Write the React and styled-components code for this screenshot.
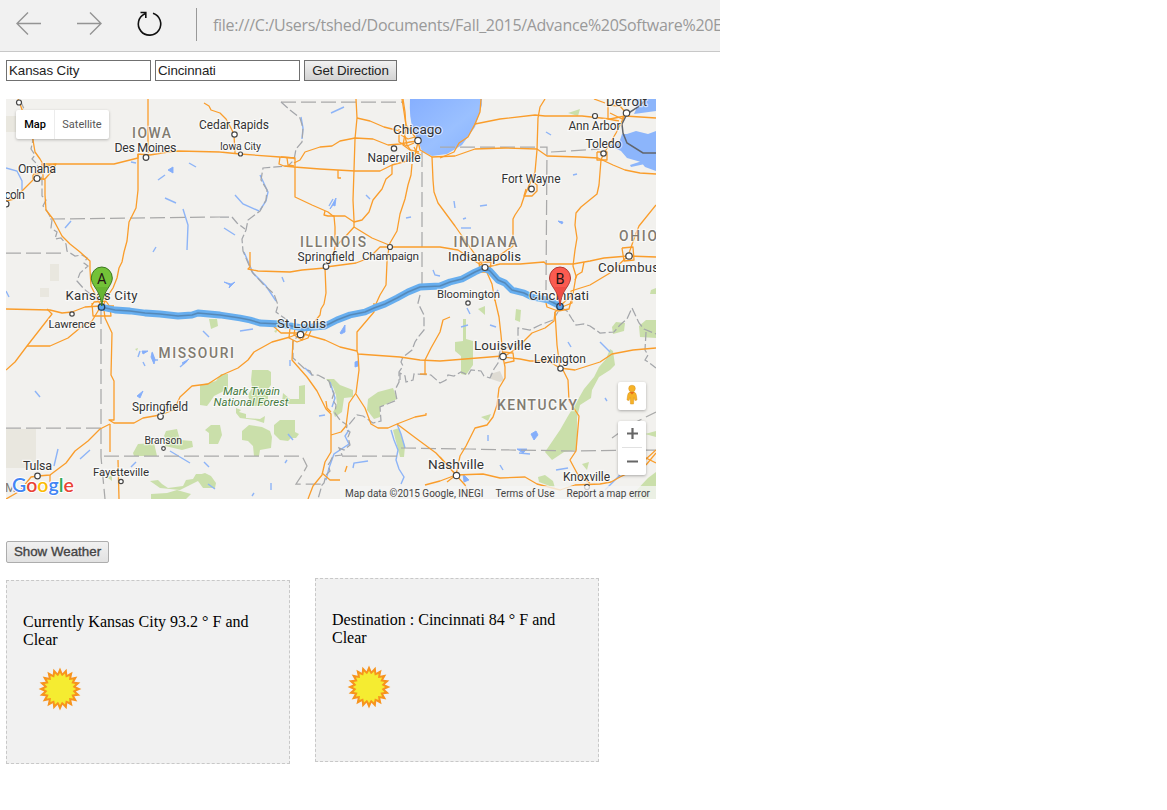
import React from "react";
import styled, { createGlobalStyle } from "styled-components";

const Global = createGlobalStyle`
  * { box-sizing: border-box; }
  body { margin: 0; background: #fff; }
`;

const Page = styled.main`
  width: 1167px;
  height: 810px;
  overflow: hidden;
  background: #fff;
`;

const BrowserBar = styled.header`
  display: flex;
  align-items: center;
  width: 720px;
  height: 52px;
  overflow: hidden;
  background: #f1f1f1;
  border-bottom: 1px solid #c8c8c8;
`;

const NavIcons = styled.svg`
  flex: none;
  width: 196px;
  height: 51px;
`;

const Address = styled.div`
  flex: none;
  height: 33px;
  margin-top: -2px;
  padding: 5px 0 0 16px;
  border-left: 1px solid #999;
  font: 16px/25px "Open Sans", sans-serif;
  letter-spacing: -0.3px;
  color: #999;
  white-space: nowrap;
`;

const Content = styled.div`
  padding-left: 6px;
`;

const SearchRow = styled.form`
  display: flex;
  gap: 4px;
  margin-top: 8px;
  height: 21px;
`;

const Field = styled.input`
  width: 145px;
  height: 21px;
  padding: 0 2px;
  border: 1px solid #707070;
  border-radius: 0;
  background: #fff;
  color: #222;
  font: 13.33px "Liberation Sans", sans-serif;
  letter-spacing: -0.08px;
  outline: none;
`;

const Button = styled.button`
  display: block;
  width: ${(p) => p.$width}px;
  height: ${(p) => (p.$soft ? 22 : 21)}px;
  padding: 0 0 ${(p) => (p.$soft ? 2 : 0)}px;
  border: 1px solid ${(p) => (p.$soft ? "#adadad" : "#707070")};
  border-radius: ${(p) => (p.$soft ? 2 : 0)}px;
  background: linear-gradient(#f1f1f1, ${(p) => (p.$soft ? "#e2e2e2" : "#d3d3d3")});
  color: ${(p) => (p.$soft ? "#444" : "#222")};
  font: 13.33px "Liberation Sans", sans-serif;
  letter-spacing: ${(p) => (p.$soft ? 0 : -0.1)}px;
  -webkit-text-stroke: ${(p) => (p.$soft ? 0.35 : 0)}px #444;
  white-space: nowrap;
`;

const MapFrame = styled.section`
  position: relative;
  width: 650px;
  height: 400px;
  margin: 18px 0 42px;
  overflow: hidden;
  background: #f2f1ee;
`;

const MapSvg = styled.svg`
  display: block;
  width: 650px;
  height: 400px;
`;

const MapTypes = styled.div`
  position: absolute;
  left: 10px;
  top: 11px;
  display: flex;
  height: 29px;
  background: #fff;
  border-radius: 2px;
  box-shadow: 0 1px 3px rgba(0, 0, 0, 0.25);
  font: 11px/29px Roboto, sans-serif;
`;

const MapType = styled.span`
  width: ${(p) => (p.$active ? 38 : 55)}px;
  text-align: center;
  color: ${(p) => (p.$active ? "#000" : "#565656")};
  font-weight: ${(p) => (p.$active ? 500 : 400)};
  border-left: ${(p) => (p.$active ? "none" : "1px solid #ececec")};
`;

const Controls = styled.div`
  position: absolute;
  right: 10px;
  top: 283px;
  display: flex;
  flex-direction: column;
  gap: 11px;
`;

const Control = styled.div`
  width: 28px;
  height: ${(p) => p.$height}px;
  background: #fff;
  border-radius: 2px;
  box-shadow: 0 1px 3px rgba(0, 0, 0, 0.3);
  & svg { display: block; }
`;

const Brand = styled.div`
  position: absolute;
  left: 6px;
  bottom: 1px;
  font: 600 19.5px/26px "Lato", sans-serif;
  letter-spacing: 0.05px;
  -webkit-text-stroke: 2px #fff;
  paint-order: stroke fill;
`;

const BrandLetter = styled.span`
  color: ${(p) => p.$color};
`;

const Credits = styled.div`
  position: absolute;
  right: 0;
  bottom: 0;
  display: flex;
  height: 13px;
  width: 316px;
  padding: 0 6px 0 5px;
  justify-content: space-between;
  background: rgba(245, 245, 245, 0.78);
  color: #444;
  font: 10px/16px Roboto, sans-serif;
  white-space: nowrap;
`;

const Cards = styled.div`
  display: flex;
  gap: 25px;
  margin-top: 15px;
`;

const Card = styled.article`
  width: 284px;
  height: 184px;
  margin-top: ${(p) => p.$drop}px;
  padding: 32px 16px 0;
  background: #f1f1f1;
  border: 1px dashed #c8c8c8;
`;

const Forecast = styled.p`
  width: 245px;
  margin: 0;
  color: #000;
  font: 16px/18px "Liberation Serif", serif;
`;

const SunIcon = styled.svg`
  display: block;
  width: 44px;
  height: 44px;
  margin: 18px 0 0 14.5px;
`;

const star = (points, outer, inner) =>
  Array.from({ length: points * 2 }, (_, i) => {
    const r = i % 2 ? inner : outer;
    const a = (Math.PI * i) / points - Math.PI / 2;
    return `${(22 + r * Math.cos(a)).toFixed(2)},${(22 + r * Math.sin(a)).toFixed(2)}`;
  }).join(" ");

const Sun = () => (
  <SunIcon viewBox="0 0 44 44">
    <polygon points={star(20, 21.4, 16)} fill="#f7941e" />
    <polygon points={star(20, 16.2, 12.8)} fill="#f5ec31" />
  </SunIcon>
);

const roads = [
  "43,164 114,164 138,158 138,154 150,155 168,152 178,151 220,152 240,154 280,157 294,158",
  "148,99 148,153",
  "138,154 138,190 136,208 132,216 129,222 127,241 124,252 122,262 119,268 117,278 113,288 107,297 103,306",
  "18,99 20,104 24,115 30,128 33,140 35,152 40,159 43,164 43,179 45,180 45,195 46,210 53,219 62,236 70,244 80,252 90,261 90,269 91,286 95,294 101,306",
  "33,175 34,174 42,173 42,164 46,166 56,164 52,171 45,179 33,179 33,175",
  "6,201 14,199 23,190 33,180",
  "204,103 209,106 211,110 220,113 226,119 232,130 234,135 235,153",
  "356,99 357,118 355,139 354,170 353,200 354,220 354,227 345,237 335,247 333,258 326,266",
  "357,118 370,121 384,127 396,130 405,133",
  "294,163 300,160 305,152 320,147 332,146 340,141 355,138 373,139 388,145 400,144 410,142 418,141",
  "280,157 279,164 284,166 294,167 320,169 355,171 380,171 392,165 407,161 415,155 418,142",
  "281,157 295,158 295,197 312,205 328,212 333,216 345,216 354,222 362,220 369,212 373,200 382,189 386,179 392,174 392,165",
  "325,211 324,215 328,216 334,216 335,227 335,245",
  "287,158 288,165 294,166",
  "338,170 338,178 341,178",
  "412,164 411,175 408,185 405,199 400,214 397,231 390,243 389,247 387,262 386,285 380,295 375,306",
  "354,227 372,238 389,245",
  "389,247 380,247 369,258 356,263 326,267",
  "389,247 422,247 440,247 458,250 484,267",
  "250,252 250,267 248,269 258,271 290,272 302,270 325,268 326,293 324,304 321,309 320,315 311,326 300,333",
  "402,99 406,125 412,133 418,141 420,150 432,157 455,156 475,149 505,148 537,149 547,156 580,157 598,158 613,165 625,170 640,173 656,174",
  "403,99 405,112 406,128 403,145 410,150 419,152",
  "399,129 399,142 407,146 414,143",
  "405,136 407,145 414,155",
  "401,135 408,139 415,137",
  "414,147 417,153 421,155",
  "440,158 454,152 459,143 468,137 475,124 500,119 535,115 545,116 582,116 610,119 625,116 656,118",
  "475,124 480,112 481,99",
  "432,157 433,180 434,192 438,203 455,226 469,246 484,267",
  "545,99 540,107 538,118 537,150 535,172 531,181 524,197 521,206 515,215 513,219 513,246 500,255 487,262",
  "532,181 537,185 537,191 532,196 524,196 526,189",
  "626,113 616,133 609,145 603,155 601,160 599,185 597,194 581,207 576,213 575,225 577,238 575,250 573,266 576,276 573,294 560,306",
  "608,99 608,119 619,121",
  "594,99 605,103",
  "610,113 622,119 626,113 620,106 608,105",
  "597,152 607,152 607,160 597,160 597,152",
  "487,267 500,264 520,264 544,262 546,264 573,264 590,261 604,258 628,256 656,257",
  "656,205 639,226 635,236 628,256 610,273 590,285 571,291 572,303 562,307",
  "584,262 582,272 577,275 575,280",
  "622,248 633,247 634,260 624,261 622,248",
  "485,268 492,284 495,301",
  "479,262 491,262 490,272 480,272 479,262",
  "6,309 50,310 62,313 72,312 85,307 100,306 114,306",
  "6,370 15,362 27,346 52,314 47,309",
  "27,346 50,346 68,338 80,328 92,321 101,306",
  "92,303 93,316 111,316 110,307 106,301 94,302 91,307",
  "104,310 105,318 112,333 111,375 114,381 114,420 109,420 114,423 134,423 143,418 160,415 174,410 180,397 192,386 208,384 222,375 238,368 248,360 254,352 272,342 290,337 300,333",
  "110,424 110,452",
  "110,424 100,429 88,441 75,451 66,463 50,475 38,476 31,477 20,491 6,499",
  "50,475 50,495",
  "118,460 119,499",
  "272,325 281,333 300,333 325,340 340,347 357,351 358,354 400,357 420,360 440,361 490,357 502,356",
  "290,328 289,338 297,342 308,338 312,328",
  "295,328 294,335 302,340 307,331",
  "357,351 357,332 374,312 374,303",
  "358,354 359,370 356,393 349,403 346,426 341,432 331,435",
  "293,340 292,360 307,377 317,391 326,409 331,414 331,452 325,462 322,475 313,486 308,499",
  "326,401 327,408 331,412",
  "356,394 365,408 371,424 378,428 388,428 397,424 415,417 426,415 426,413",
  "397,424 417,439 436,453 450,468 456,475",
  "425,374 425,360 431,348 440,332 443,320 450,317",
  "420,374 427,374",
  "322,473 330,480 340,480",
  "345,472 347,466",
  "425,485 440,481 456,475 483,474 500,478 525,477 537,484 560,490 575,485 600,484 611,482 620,477 637,469 646,459 656,450",
  "495,300 499,317 501,335 503,357 505,367 505,378 499,388 497,405 493,417 487,425 475,428 466,446 460,456 456,475",
  "502,352 513,353 514,361 505,363",
  "503,357 520,359 530,361 548,361 560,368",
  "505,356 516,349 524,341 532,333 545,328 554,321 555,312 562,306",
  "546,303 547,307 558,311 569,309 571,301",
  "555,312 557,345 560,368 575,370 600,362 612,354 633,350 656,348",
  "563,370 568,380 569,401 579,416 576,451 570,460 578,475 590,483",
  "456,475 465,485 471,499",
  "440,457 456,475 447,482",
  "640,455 656,463",
  "646,465 656,453",
];

const borders = [
  "6,253 65,253",
  "50,219 220,217",
  "101,309 101,457 105,499",
  "6,428 101,428",
  "104,456 302,456 307,466 302,475 296,484 325,484",
  "342,456 400,456",
  "401,448 470,449 510,450 575,451 656,450",
  "281,102 403,102",
  "422,152 422,291",
  "440,147 547,147 546,290",
  "551,152 600,149",
  "612,438 630,425 656,412",
];

const riverBorders = [
  "20,100 25,111 33,140 31,149 35,155 32,159 37,164 42,180 42,196 46,200 43,206 47,211 52,220 51,228 57,232 55,239 61,238 66,244 67,251 75,256 82,255 87,258 84,263 88,266 80,273 77,281 84,289 98,300",
  "281,102 290,110 300,118 303,128 302,142 296,149 294,160 288,166 263,168 261,180 267,190 266,200 260,211 248,220 246,230 242,239 243,251 252,272 263,284 274,294 278,305 276,312 287,320 293,327 300,333 293,342 293,358 305,369 310,371 312,375 318,375 329,381 331,388 334,393 332,399 336,405 335,413 340,420 347,425 346,430 350,432 348,437 350,445 344,450 339,448 342,455 333,456 330,462 328,465 330,471 326,475 324,483 322,485 318,499",
  "220,217 232,217 237,223 245,229",
  "420,295 418,303 424,315 424,330 419,336 415,342 412,350 403,357 401,362 403,366 399,372 399,382 395,390 397,400 380,407 381,421 373,423 363,416 357,415 347,427",
  "400,380 400,373 405,376 406,382 413,380 414,374 431,375 440,383 446,380 448,375 454,376 461,372 468,375 471,370 481,371 484,376 490,378 494,369 498,363 500,350 518,343 518,328 530,330 540,325 553,320 558,312",
  "560,307 567,311 572,319 576,325 584,324 590,326 600,333 614,332 620,325 627,319 632,308 639,323 644,329 656,334",
  "646,332 645,350 648,355 645,360 648,362 656,368",
];

const rivers = [
  "6,168 17,171 22,181 22,190", "131,162 136,163", "158,180 165,175", "165,198 176,203", "189,163 196,167",
  "183,209 188,225 187,250", "153,252 156,247", "65,228 71,221", "6,291 9,297", "301,117 303,128 302,139",
  "260,175 268,192 266,201 260,210", "235,195 243,204 259,211", "244,252 253,273 266,286 276,301",
  "224,228 235,235", "331,113 344,107", "329,206 333,199", "366,195 370,199", "406,218 411,217",
  "433,270 435,275 440,276", "282,277 284,282", "454,201 455,208", "463,219 466,218", "480,206 487,205",
  "461,228 471,228", "559,222 562,222", "573,175 577,174", "546,132 551,135", "203,331 209,337",
  "140,351 138,357", "152,352 155,360 158,360", "143,362 145,366", "180,367 187,361", "35,391 40,397",
  "54,466 58,449", "80,459 90,450", "131,467 136,462", "170,451 190,463", "204,462 209,467", "287,460 285,463",
  "271,483 271,490", "252,496 254,493", "391,430 394,440 398,450 396,460 399,469 404,477 401,484", "397,424 401,434 405,448",
  "349,430 345,436 349,444 334,454 329,468 326,480", "330,382 335,398 332,407", "353,468 354,463 368,461",
  "319,416 325,415", "240,331 253,329", "290,360 290,366", "493,297 498,290", "519,453 530,454",
  "467,308 470,314", "490,325 496,327", "568,342 571,347", "605,398 607,401", "461,327 468,325",
  "488,435 488,441", "500,465 503,470", "556,470 568,468", "605,490 620,475", "625,471 636,467",
  "288,434 293,440", "208,484 215,489", "305,368 312,375", "600,342 610,352",
];

const lakes = [
  "168,170 173,167 173,173", "331,207 336,198 335,206 333,205 330,209", "340,333 345,325 345,332 341,334", "355,362 358,361 358,366 355,367",
  "152,353 155,360 154,364 151,357", "137,396 143,391 140,398", "182,363 189,359 184,364",
  "531,434 536,431 538,435 534,440", "463,474 469,480 464,482", "224,282 231,284 235,282 229,288 230,285",
  "517,449 527,449 523,453", "558,221 563,222 562,224", "142,351 148,351 143,354",
];

const greens = [
  "200,385 216,381 221,374 228,374 228,389 214,396 210,402 207,406 200,405",
  "252,370 268,370 271,372 271,385 268,389 268,401 262,406 251,406 248,395 252,388 251,380",
  "283,393 290,399 299,399 299,386 305,385 305,404 290,404 282,402",
  "236,408 241,410 239,412 246,414 246,418 260,419 265,416 264,423 255,420 240,418 236,413",
  "242,431 249,425 262,427 270,431 272,437 271,448 260,450 259,456 254,456 253,446 248,441 242,440",
  "274,425 280,420 295,420 295,432 299,434 296,438 291,438 288,441 280,440 274,434",
  "205,430 211,425 220,425 222,435 218,444 209,444 209,433",
  "195,476 205,473 211,476 216,483 215,488 203,488 198,481",
  "326,379 334,379 340,385 353,390 353,397 344,398 342,412 335,417 333,412 337,405 336,395 333,387",
  "368,399 378,392 393,388 397,399 380,407 380,417 374,419 367,410",
  "393,430 399,428 405,446 404,457 400,457",
  "463,319 466,319 466,339 473,341 473,365 466,375 461,374 461,356 455,351 455,342 463,341",
  "516,309 521,310 520,322 515,320",
  "610,349 613,351 615,365 610,370 599,377 592,390 591,398 580,405 577,418 577,450 564,452 552,460 545,452 560,430 568,416 576,403 584,389 594,377 599,367 606,359",
  "612,327 616,322 625,323 624,331 613,334",
  "639,326 646,320 656,320 656,338 640,337",
  "481,417 491,414 488,421",
  "150,481 158,480 162,484 168,488 183,486 186,480 193,479 196,474 204,474 200,480 190,485 180,490 160,488",
  "151,494 167,493 177,490 191,494 186,499 151,499",
  "133,453 138,444 154,443 157,456 134,456",
  "166,431 177,429 180,440 192,441 193,447 182,450 165,446 167,440 164,436",
  "568,113 580,109 578,116",
  "209,319 217,319 218,326 211,329",
  "651,290 656,288 656,294 650,294",
  "538,477 545,475 553,481 555,488 539,482",
  "634,493 648,478 656,472 656,499 634,499",
  "582,464 589,462 587,470",
  "645,434 656,431 656,437",
  "478,309 485,306 485,315",
  "274,331 278,329 276,333",
  "108,478 112,474 112,481",
  "135,349 138,348 137,351",
];

const cities = [
  [234.5, 134.5, 2.7], [240.5, 154, 2], [146, 157.5, 2.8], [37, 178.5, 3], [19, 102.5, 2.5], [6, 204, 3],
  [394, 148.5, 2.7], [418, 140.5, 3.2], [326, 266.5, 2.8], [390, 247, 2.5], [485, 267.5, 3], [531.5, 189, 2.8],
  [603.5, 153.5, 2.7], [595, 116, 2.5], [626.5, 113, 3.2], [629, 256, 3.2], [468, 303, 2.2], [503, 356.5, 3.2],
  [560.5, 368.5, 2.7], [300.5, 334.5, 3.2], [160.5, 416.5, 2.8], [163.5, 448.5, 1.8], [121, 481.5, 2.2],
  [37.5, 476, 2.8], [72, 314, 2.2], [456.5, 475.5, 3.2], [587, 487, 2.5],
];

// [text, left, baseline, width, size]
const labels = [
  ["Cedar Rapids", 199, 128.5, 70, 12], ["Iowa City", 220, 149.5, 41, 10.5], ["Des Moines", 114.5, 151.7, 62, 12.5],
  ["Omaha", 18, 172.5, 38, 12.5], ["coln", 4.5, 198.5, 20.5, 12], ["Chicago", 393, 134.3, 49, 13.6],
  ["Naperville", 367.5, 162, 53, 12], ["Springfield", 297.5, 260.7, 57, 12], ["Champaign", 362, 260, 57, 11.8],
  ["Indianapolis", 448, 261.2, 73, 13.2], ["Fort Wayne", 501.5, 183.3, 59, 12], ["Ann Arbor", 568.5, 129.8, 52, 12],
  ["Toledo", 585.5, 148, 36, 12.3], ["Detroit", 606, 106, 41, 13.2], ["Columbus", 598, 272, 61, 13.2],
  ["Bloomington", 437, 298, 63, 11.4], ["Cincinnati", 529, 300.3, 60, 13.2], ["Kansas City", 65.5, 300.3, 72, 13.2],
  ["Lawrence", 48.5, 327.5, 47, 11.5], ["St Louis", 277, 328.2, 49, 13.2], ["Louisville", 474, 349.7, 57, 13.4],
  ["Lexington", 534, 362.7, 52, 12], ["Springfield", 132, 410.7, 56, 12], ["Branson", 144.5, 444, 37.5, 10.5],
  ["Fayetteville", 93, 476.3, 56, 11.5], ["Tulsa", 23, 470.3, 29, 12.5], ["Nashville", 428, 469.3, 56, 13.6],
  ["Knoxville", 563, 481, 47, 12],
];

const states = [
  ["IOWA", 132, 137.5, 39], ["ILLINOIS", 300, 247, 66], ["INDIANA", 453.5, 247, 64], ["OHIO", 619, 241, 38],
  ["MISSOURI", 158.5, 358.2, 75.5], ["KENTUCKY", 497, 410.2, 80],
];

const routePath = "101,307 115,310 130,311 145,313 160,314 178,316 192,315 198,313 220,315 240,318 250,320 260,323 280,324 303,328 325,326 337,320 350,315 365,312 374,308 385,304 397,298 408,292 420,287 440,286 450,282 462,279 475,272 484,268 490,271 498,280 505,283 512,290 524,293 532,297 548,300 560,306";

const Line = ({ points, ...rest }) => <polyline points={points} fill="none" {...rest} />;

const Pin = ({ x, letter, light, dark, edge }) => (
  <g transform={`translate(${x} 306)`}>
    <path d="M0 0C-1-9-3-13-7-19C-9-22-10.5-25-10.5-28A10.5 11 0 0 1 10.5-28C10.5-25 9-22 7-19C3-13 1-9 0 0Z" fill={light} stroke={edge} />
    <path d="M0-2C-1-10-3-14-6-19H6C3-14 1-10 0-2Z" fill={dark} opacity=".65" />
    <text y="-22" textAnchor="middle" fontSize="14.5" fill="#231515">{letter}</text>
  </g>
);

const RegionMap = () => (
  <MapSvg viewBox="6 99 650 400" fontFamily="Roboto, sans-serif">
    <defs>
      <linearGradient id="lake" x2="1" y2="1">
        <stop stopColor="#86afff" /><stop offset=".55" stopColor="#9ac0ff" /><stop offset="1" stopColor="#86b1ff" />
      </linearGradient>
    </defs>
    <rect x="6" y="99" width="650" height="400" fill="#f2f1ee" />
    <path d="M6 429H36V461L28 468H6ZM50 264H59V281H50ZM40 288H49V297H40ZM6 116H16V132H6Z" fill="#e9e7df" />
    <path d="M490 374L500 371 504 380 500 382 491 379Z" fill="#dedbd3" />
    <g fill="#cadfaa">{greens.map((p) => <polygon key={p} points={p} />)}</g>
    <path d="M410 99Q409 118 413 129L422 151 432 156 447 154 462 145 475 127 482 105V99Z" fill="url(#lake)" />
    <path d="M656 99H634Q639 105 634 114L656 111ZM622 134L627 134 636 131 648 134 656 131V171L645 167 641 162 627 158 621 151 609 145 619 143ZM630 165L642 161 645 164 631 167Z" fill="#8cb5fb" />
    <g stroke="#8db4f7" strokeWidth="1.4">{rivers.map((p) => <Line key={p} points={p} />)}</g>
    <g fill="#84aefa" stroke="#84aefa" strokeWidth=".9">{lakes.map((p) => <polygon key={p} points={p} />)}</g>
    <g stroke="#a9a9a9" strokeWidth="1.25" strokeDasharray="15 5">{borders.map((p) => <Line key={p} points={p} />)}</g>
    <g stroke="#a4a6aa" strokeWidth="1.25" strokeDasharray="9 3">{riverBorders.map((p) => <Line key={p} points={p} />)}</g>
    <g stroke="#fa9d2b" strokeWidth="1.3" strokeLinejoin="round">{roads.map((p) => <Line key={p} points={p} />)}</g>
    <path d="M647 99L638 107 627 114 622 124 623 133 627 143 643 153H656" fill="none" stroke="#61656c" strokeWidth="1.5" />
    <Line points={routePath} stroke="#67aeef" strokeWidth="6.8" strokeLinejoin="round" />
    <Line points={routePath} stroke="#5689b8" strokeWidth="1.5" strokeLinejoin="round" />
    <g fill="#fff" stroke="#444" strokeWidth="1.2">
      {cities.map(([x, y, r]) => <circle key={`${x}-${y}`} cx={x} cy={y} r={r} />)}
    </g>
    <g fill="#5ba4ed" stroke="#213c58" strokeWidth="1.3">
      <circle cx="101.500" cy="307" r="3.200" /><circle cx="560" cy="306.500" r="3.200" />
    </g>
    <g fill="#333" stroke="#fff" strokeWidth="2.4" strokeOpacity=".6" paintOrder="stroke">
      {labels.map(([text, x, y, width, size]) => (
        <text key={`${text}-${x}`} x={x} y={y} fontSize={size} textLength={width}>{text}</text>
      ))}
    </g>
    <g fill="#817b70" stroke="#fff" strokeWidth="2.4" strokeOpacity=".6" paintOrder="stroke" fontSize="13.8" fontWeight="500">
      {states.map(([text, x, y, width]) => <text key={text} x={x} y={y} textLength={width}>{text}</text>)}
    </g>
    <g fill="#467a40" stroke="#fff" strokeWidth="2" strokeOpacity=".75" paintOrder="stroke" fontSize="11.5" fontStyle="italic">
      <text x="223" y="395.300" textLength="57">Mark Twain</text>
      <text x="213.500" y="406" textLength="75">National Forest</text>
    </g>
    <text x="5" y="492" fontSize="12.500" fill="#817b70">M</text>
    <Pin x={101.8} letter="A" light="#73c238" dark="#63ad30" edge="#3c7820" />
    <Pin x={560} letter="B" light="#fa5b50" dark="#e9463e" edge="#b13831" />
  </MapSvg>
);

const brandLetters = [["G", "#4285f4"], ["o", "#ea4335"], ["o", "#fbbc05"], ["g", "#4285f4"], ["l", "#34a853"], ["e", "#ea4335"]];

export default function App() {
  return (
    <Page>
      <Global />
      <BrowserBar>
        <NavIcons viewBox="0 0 196 51" fill="none" strokeWidth="1.4">
          <path d="M41 23.500H17M28 12.500L17 23.500L28 34.500M77 23.500H101M90 12.500L101 23.500L90 34.500" stroke="#949494" />
          <path d="M153 13.300A11.200 11.200 0 1 1 145 13.700M140.500 12.500H145.800V18" stroke="#111" strokeWidth="1.600" />
        </NavIcons>
        <Address>file:///C:/Users/tshed/Documents/Fall_2015/Advance%20Software%20E</Address>
      </BrowserBar>
      <Content>
        <SearchRow>
          <Field defaultValue="Kansas City" />
          <Field defaultValue="Cincinnati" />
          <Button type="button" $width={93}>Get Direction</Button>
        </SearchRow>
        <MapFrame>
          <RegionMap />
          <MapTypes><MapType $active>Map</MapType><MapType>Satellite</MapType></MapTypes>
          <Controls>
            <Control $height={28}>
              <svg width="28" height="28" viewBox="0 0 28 28">
                <path d="M10.500 11Q9.500 12 9 18L11 18.500 12 15.500 12.500 22H15.500L16 15.500 17 18.500 19 18Q18.500 12 17.500 11L15.500 9.500H12.500Z" fill="#f6b226" stroke="#d99420" strokeWidth=".5" />
                <circle cx="14" cy="6.500" r="3.300" fill="#f6b226" stroke="#d99420" strokeWidth=".5" />
                <path d="M11.500 10L14 12.500 16.500 10Z" fill="#e66c1c" />
              </svg>
            </Control>
            <Control $height={54}>
              <svg width="28" height="54" viewBox="0 0 28 54">
                <path d="M9 12.500H20M14.500 7V18M9 40.500H20" stroke="#666" strokeWidth="2.200" />
                <path d="M4 26.500H24" stroke="#e1e1e1" />
              </svg>
            </Control>
          </Controls>
          <Brand>{brandLetters.map(([letter, color], i) => <BrandLetter key={i} $color={color}>{letter}</BrandLetter>)}</Brand>
          <Credits><span>Map data ©2015 Google, INEGI</span><span>Terms of Use</span><span>Report a map error</span></Credits>
        </MapFrame>
        <Button type="button" $soft $width={103}>Show Weather</Button>
        <Cards>
          <Card $drop={2}><Forecast>Currently Kansas City 93.2 ° F and Clear</Forecast><Sun /></Card>
          <Card $drop={0}><Forecast>Destination : Cincinnati 84 ° F and Clear</Forecast><Sun /></Card>
        </Cards>
      </Content>
    </Page>
  );
}
